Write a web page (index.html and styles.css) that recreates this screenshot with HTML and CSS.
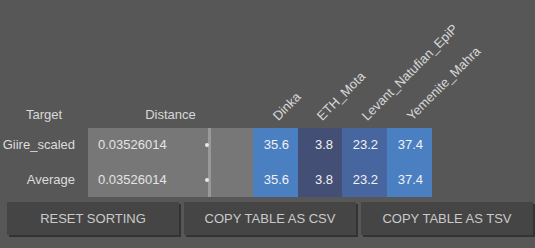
FILE: index.html
```html
<!DOCTYPE html>
<html lang="en">
<head>
	<meta charset="UTF-8">
	<title>Distance table</title>
	<link rel="stylesheet" href="styles.css">
</head>
<body>
	<table class="dist">
		<tr class="head">
			<th class="col-target">Target</th>
			<th class="col-dist">Distance</th>
			<th class="col-pop w45"><span>Dinka</span></th>
			<th class="col-pop w44"><span>ETH_Mota</span></th>
			<th class="col-pop w45"><span>Levant_Natufian_EpiP</span></th>
			<th class="col-pop w45"><span>Yemenite_Mahra</span></th>
		</tr>
		<tr>
			<td class="name">Giire_scaled</td>
			<td class="dval"><div class="dwrap"><span class="num">0.03526014</span><i class="dot"></i></div></td>
			<td class="pct c1">35.6</td>
			<td class="pct c2">3.8</td>
			<td class="pct c3">23.2</td>
			<td class="pct c4">37.4</td>
		</tr>
		<tr>
			<td class="name">Average</td>
			<td class="dval"><div class="dwrap"><span class="num">0.03526014</span><i class="dot"></i></div></td>
			<td class="pct c1">35.6</td>
			<td class="pct c2">3.8</td>
			<td class="pct c3">23.2</td>
			<td class="pct c4">37.4</td>
		</tr>
	</table>
	<div class="btns">
		<button class="btn">RESET SORTING</button>
		<button class="btn">COPY TABLE AS CSV</button>
		<button class="btn">COPY TABLE AS TSV</button>
	</div>
</body>
</html>
```

FILE: styles.css
```css
*{
	box-sizing: border-box;
	margin: 0;
	padding: 0;
}
body{
	background: #575757;
	font-family: "Liberation Sans", Arial, sans-serif;
	font-size: 13px;
	color: #dcdcdc;
	width: 535px;
	height: 248px;
	overflow: hidden;
}
.dist{
	table-layout: fixed;
	border-collapse: collapse;
	width: 432px;
}
.head th{
	height: 128px;
	font-weight: normal;
	vertical-align: bottom;
	padding-bottom: 5px;
	line-height: 16px;
	text-align: center;
	color: #d8d8d8;
}
.col-target{ width: 88px; }
.col-dist{ width: 165px; }
.w45{ width: 45px; }
.w44{ width: 44px; }
.col-pop{
	position: relative;
}
.col-pop span{
	position: absolute;
	left: calc(50% + 5px);
	bottom: 4px;
	white-space: nowrap;
	transform-origin: 0 100%;
	transform: rotate(-45deg);
}
td{
	height: 34.5px;
	line-height: 16px;
	vertical-align: middle;
}
.name{
	text-align: right;
	padding-right: 13px;
	color: #dcdcdc;
}
.dval{
	background: linear-gradient(to right, #777 120px, #999 120px, #999 123px, #777 123px);
	color: #e4e4e4;
}
.dwrap{
	display: flex;
	align-items: center;
	padding-left: 10px;
}
.num{
	flex: 0 0 107px;
}
.dot{
	width: 4px;
	height: 4px;
	border-radius: 50%;
	background: #e8e8e8;
}
.pct{
	text-align: right;
	padding-right: 9px;
	color: #f2f2f2;
}
.c1, .c4{ background: #4a7fc2; }
.c2{ background: #434f74; }
.c3{ background: #4766a0; }
.btns{
	display: flex;
	gap: 5px;
	padding-left: 7px;
	margin-top: 5px;
}
.btn{
	width: 172px;
	height: 33px;
	border: 0;
	background: #454545;
	box-shadow: 2px 2px 0 #333;
	color: #cacaca;
	font-family: "Liberation Sans", Arial, sans-serif;
	font-size: 13px;
}
```
